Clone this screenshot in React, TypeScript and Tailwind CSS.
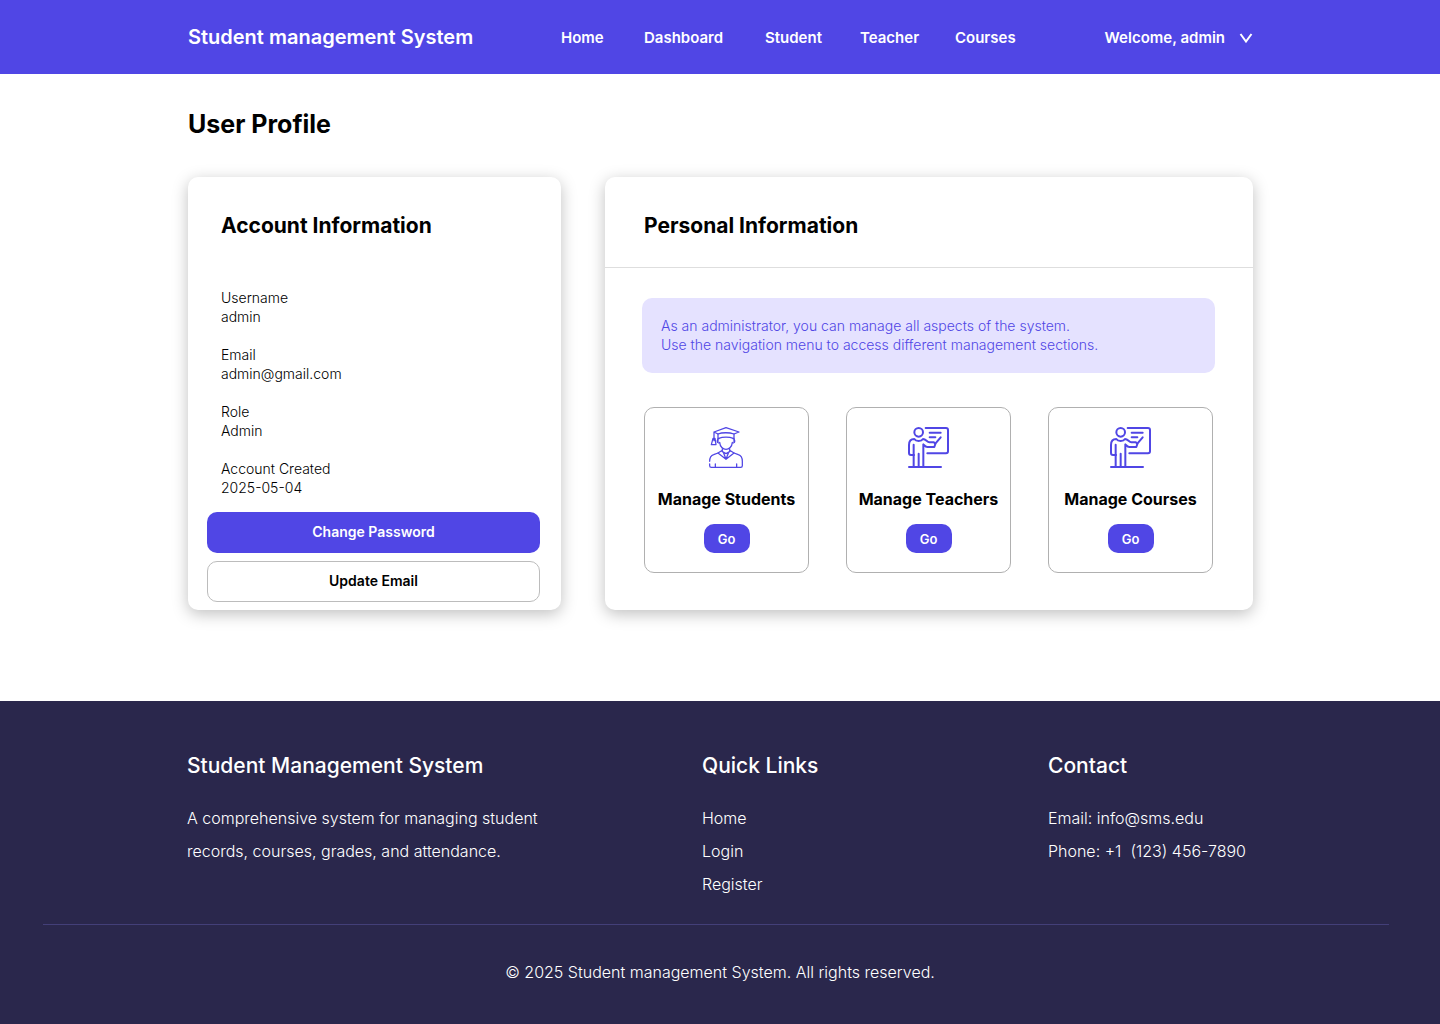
import React from "react";

const navLinks = [
  { label: "Home", width: "w-[83px]" },
  { label: "Dashboard", width: "w-[121px]" },
  { label: "Student", width: "w-[95px]" },
  { label: "Teacher", width: "w-[95px]" },
  { label: "Courses", width: "" },
];

const account = [
  { label: "Username", value: "admin" },
  { label: "Email", value: "admin@gmail.com" },
  { label: "Role", value: "Admin" },
  { label: "Account Created", value: "2025-05-04" },
];

function StudentIcon() {
  return (
    <svg viewBox="0 0 123 123" className="size-[41px]" fill="none" stroke="currentColor" strokeWidth="3.8" strokeLinecap="round" strokeLinejoin="round" aria-hidden="true">
      <path d="M24 15 60 2l39 13-15 6C70 16 48 16 36 21l-12-6v16" />
      <path d="M36 21v14c14-5 34-5 48 0V21" />
      <path d="M21 34h6l3 19H16z M24 33v8" />
      <path d="M36 35v9M84 35v9M39 35c-7 2-7 12-1 13M81 35c7 2 7 12 1 13M41 46c1 13 10 21 19 21s18-8 19-21" />
      <path d="M49 65v9l11 6 11-6V65M49 70l-13 8 24 19 24-19-13-8M53 79l7 17 7-17" />
      <path d="M36 78 23 83c-9 3-12 10-12 20M84 78l13 5c9 3 12 10 12 20v13q0 5-5 5H16q-5 0-5-5v-5M28 111v10M92 111v10" />
    </svg>
  );
}

function TeacherIcon() {
  return (
    <svg viewBox="0 0 123 123" className="size-[41px]" fill="none" stroke="currentColor" strokeWidth="6" strokeLinecap="round" strokeLinejoin="round" aria-hidden="true">
      <path d="M53 3h61q6 0 6 6v64q0 6-6 6H58" />
      <path d="M65 17h33M65 31h17M98 31 82 50" />
      <circle cx="32" cy="16" r="13" />
      <path d="M18 84h-9q-6 0-6-6V54c0-12 6-18 16-18 5 8 21 8 26 0 9 0 12 10 19 10h14l4 5-3 9H58c-6 0-9-5-12-8v66" />
      <path d="M17 53v66M32 80v39M3 120h96" />
    </svg>
  );
}

const tiles = [
  { title: "Manage Students", icon: <StudentIcon /> },
  { title: "Manage Teachers", icon: <TeacherIcon /> },
  { title: "Manage Courses", icon: <TeacherIcon /> },
];

export default function App() {
  return (
    <div className="flex min-h-screen flex-col bg-white font-['Inter',sans-serif] text-black">
      <header className="bg-[#5046e5] text-white">
        <div className="mx-auto flex h-[74px] max-w-[1066px] items-center pl-px">
          <a href="#" className="w-[373px] text-xl font-semibold">Student management System</a>
          <nav className="flex flex-1 pt-0.5 text-[15px] font-semibold">
            {navLinks.map((l) => (
              <span key={l.label} className={l.width}>
                <a href="#">{l.label}</a>
              </span>
            ))}
          </nav>
          <button type="button" className="flex items-center gap-[14px] pt-0.5 text-[15px] font-semibold">
            Welcome, admin
            <svg viewBox="0 0 14 10" className="h-[10px] w-[14px]" fill="none" stroke="currentColor" strokeWidth="2" aria-hidden="true">
              <path d="M1.5 1l5.5 7.5L12.500 1" />
            </svg>
          </button>
        </div>
      </header>

      <main className="mx-auto w-full max-w-[1066px] flex-1 pt-8 pb-[91px] pl-px">
        <h1 className="text-[25px] leading-9 font-bold">User Profile</h1>
        <div className="mt-[35px] grid grid-cols-[373fr_648fr] gap-11">
          <section className="rounded-[10px] bg-white pt-[35px] pr-[21px] pb-2 pl-[19px] shadow-[0_4px_16px_rgba(0,0,0,0.25)]">
            <h2 className="px-[14px] text-[21px] leading-7 font-bold">Account Information</h2>
            <dl className="mt-12 grid gap-[19px] px-[14px] text-sm leading-[19px] font-light">
              {account.map((a) => (
                <div key={a.label}>
                  <dt>{a.label}</dt>
                  <dd>{a.value}</dd>
                </div>
              ))}
            </dl>
            <div className="mt-[15px] grid gap-2 text-sm font-semibold">
              <button type="button" className="h-[41px] rounded-[10px] bg-[#5046e5] pb-0.5 text-white">Change Password</button>
              <button type="button" className="h-[41px] rounded-[10px] border border-[#bcbcbc] pb-0.5">Update Email</button>
            </div>
          </section>

          <section className="rounded-[10px] bg-white shadow-[0_4px_16px_rgba(0,0,0,0.25)]">
            <h2 className="border-b border-[#dedede] px-[39px] pt-[35px] pb-[27px] text-[21px] leading-7 font-bold">Personal Information</h2>
            <div className="pt-[30px] pr-[38px] pl-[37px]">
              <p className="rounded-[10px] bg-[#e5e2ff] px-[19px] pt-[18px] pb-[19px] text-sm leading-[19px] font-light text-[#5046e5]">
                As an administrator, you can manage all aspects of the system.
                <br />
                Use the navigation menu to access different management sections.
              </p>
              <div className="mt-[34px] grid grid-cols-3 gap-[37px] px-0.5">
                {tiles.map((t) => (
                  <article key={t.title} className="flex h-[166px] flex-col items-center rounded-[10px] border border-[#b0b0b0] pt-[19px]">
                    <span className="text-[#5046e5]">{t.icon}</span>
                    <h3 className="mt-[21px] text-base leading-5 font-bold whitespace-nowrap">{t.title}</h3>
                    <button type="button" className="mt-[15px] h-[29px] w-[46px] rounded-[10px] bg-[#5046e5] pt-0.5 text-[13px] font-semibold text-white">Go</button>
                  </article>
                ))}
              </div>
            </div>
          </section>
        </div>
      </main>

      <footer className="bg-[#2a274c] text-white">
        <div className="mx-auto grid max-w-[1066px] grid-cols-[515fr_346fr_205fr] pt-[51px] pb-[23px] text-base leading-[33px] font-light">
          <section>
            <h2 className="text-[21px] leading-7 font-medium">Student Management System</h2>
            <p className="mt-[22px] max-w-[370px]">A comprehensive system for managing student records, courses, grades, and attendance.</p>
          </section>
          <nav aria-label="Quick Links">
            <h2 className="text-[21px] leading-7 font-medium">Quick Links</h2>
            <ul className="mt-[22px]">
              <li><a href="#">Home</a></li>
              <li><a href="#">Login</a></li>
              <li><a href="#">Register</a></li>
            </ul>
          </nav>
          <section className="whitespace-nowrap">
            <h2 className="text-[21px] leading-7 font-medium">Contact</h2>
            <p className="mt-[22px]">Email: info@sms.edu</p>
            <p>Phone: +1&nbsp; (123) 456-7890</p>
          </section>
        </div>
        <hr className="mr-[51px] ml-[43px] border-[#433f78]" />
        <p className="pt-[35px] pb-10 text-center text-base font-light">© 2025 Student management System. All rights reserved.</p>
      </footer>
    </div>
  );
}
